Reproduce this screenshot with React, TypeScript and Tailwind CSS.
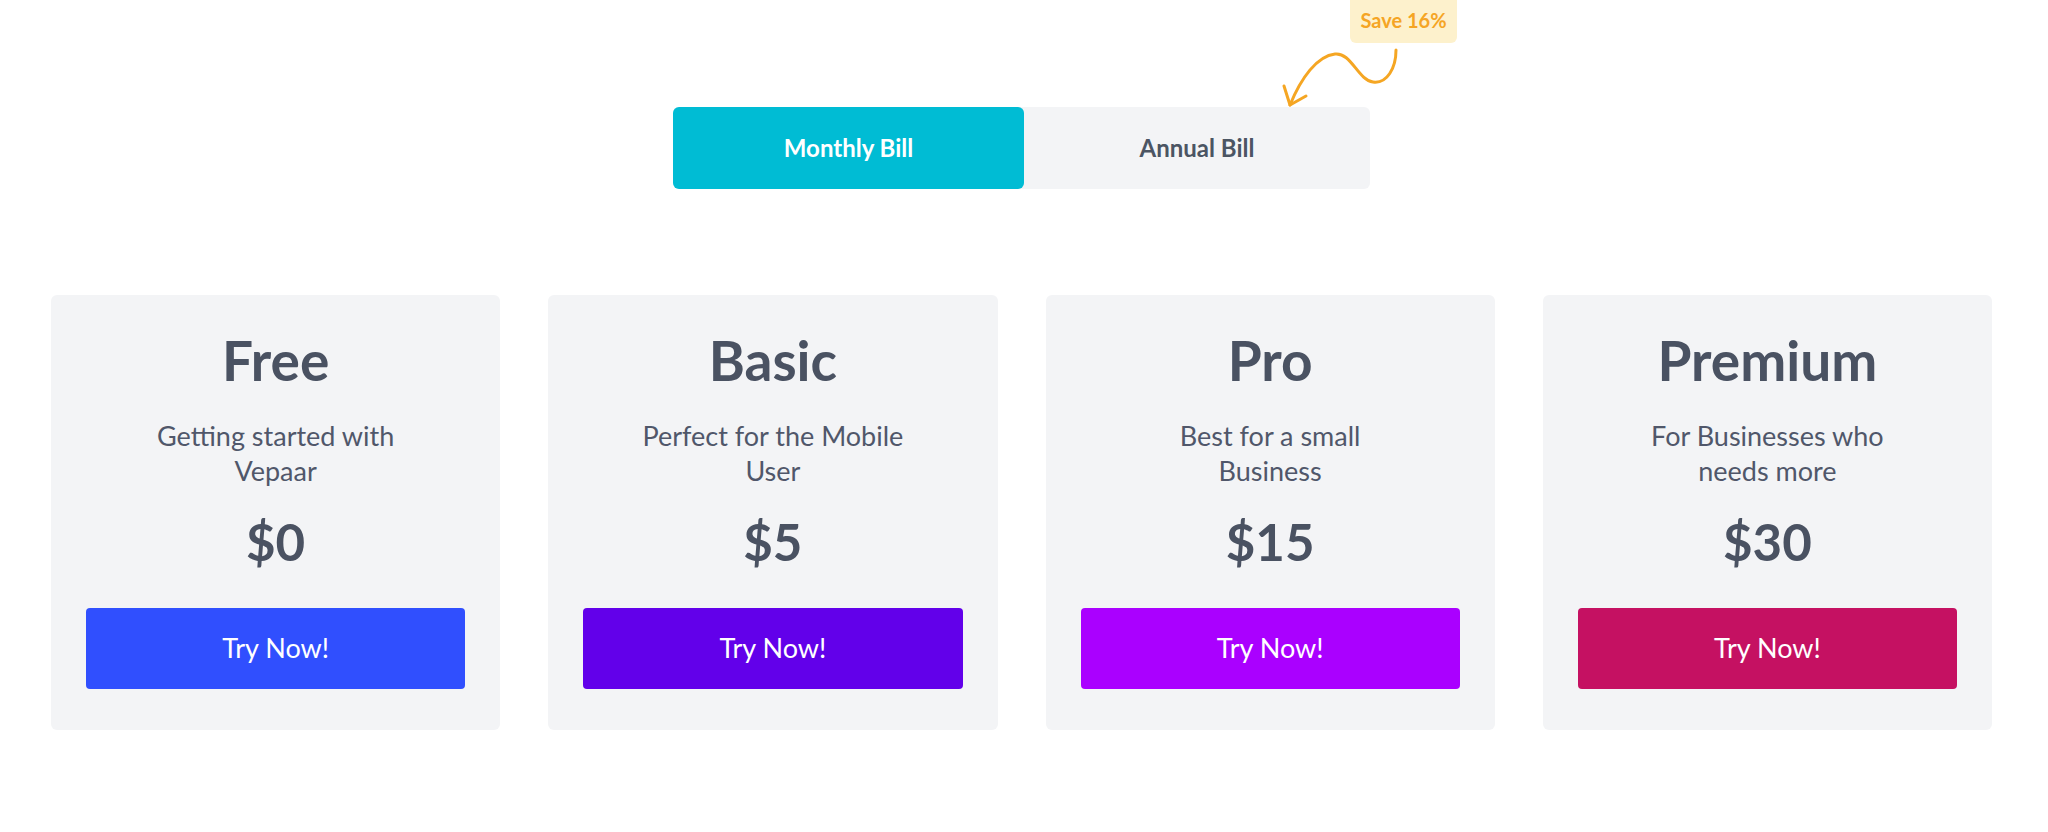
import React, { useState } from 'react';

interface Plan {
  name: string;
  blurb: string;
  price: string;
  button: string;
}

const plans: Plan[] = [
  { name: 'Free', blurb: 'Getting started with Vepaar', price: '$0', button: 'bg-[#304ffe]' },
  { name: 'Basic', blurb: 'Perfect for the Mobile User', price: '$5', button: 'bg-[#6200ea]' },
  { name: 'Pro', blurb: 'Best for a small Business', price: '$15', button: 'bg-[#aa00ff]' },
  { name: 'Premium', blurb: 'For Businesses who needs more', price: '$30', button: 'bg-[#c51162]' },
];

const App: React.FC = () => {
  const [billing, setBilling] = useState<'monthly' | 'annual'>('monthly');

  return (
    <div className="min-h-screen bg-white font-['Lato',sans-serif] pl-[51px] pr-[56px]">
      {/* Billing toggle */}
      <div className="flex justify-center pt-[107px]">
        <div className="relative flex w-[697px] h-[82px] rounded-md bg-[#f3f4f6]">
          <span className="absolute top-[-113px] left-[677px] w-[107px] h-[49px] pt-[2px] rounded-md bg-[#fdf1cc] flex items-center justify-center text-[20px] font-bold text-[#f5a524]">
            Save 16%
          </span>
          <svg
            className="absolute top-[-61px] left-[606px]"
            width="126"
            height="66"
            viewBox="0 0 126 66"
            fill="none"
          >
            <path
              d="M117 4 C 117 22, 108 38, 94 36 C 79 34, 72 6, 56 8 C 38 10, 22 32, 11 59"
              stroke="#f5a623"
              strokeWidth="3"
              strokeLinecap="round"
            />
            <path
              d="M5 40 L 11 59 L 27 50"
              stroke="#f5a623"
              strokeWidth="3"
              strokeLinecap="round"
              strokeLinejoin="round"
            />
          </svg>
          <button
            onClick={() => setBilling('monthly')}
            className={`w-[351px] h-full rounded-md text-[24px] font-bold ${billing === 'monthly' ? 'bg-[#00bcd4] text-white' : 'text-[#4b5563]'}`}
          >
            Monthly Bill
          </button>
          <button
            onClick={() => setBilling('annual')}
            className={`flex-1 h-full rounded-md text-[24px] font-bold ${billing === 'annual' ? 'bg-[#00bcd4] text-white' : 'text-[#4b5563]'}`}
          >
            Annual Bill
          </button>
        </div>
      </div>

      {/* Plans */}
      <div className="grid grid-cols-4 gap-12 mt-[106px]">
        {plans.map(plan => (
          <div key={plan.name} className="bg-[#f3f4f6] rounded-md pt-10 pb-[41px] px-[35px] flex flex-col items-center text-center">
            <h2 className="text-[55px] leading-[50px] font-bold text-[#4a5262]">{plan.name}</h2>
            <p className="mt-[33px] max-w-[275px] text-[27px] leading-[35px] text-[#50576a]">{plan.blurb}</p>
            <div className="mt-7 text-[51px] leading-none font-bold text-[#4a5262]">{plan.price}</div>
            <button className={`mt-[41px] w-full h-[81px] rounded ${plan.button} text-white text-[27px]`}>
              Try Now!
            </button>
          </div>
        ))}
      </div>
    </div>
  );
};

export default App;
